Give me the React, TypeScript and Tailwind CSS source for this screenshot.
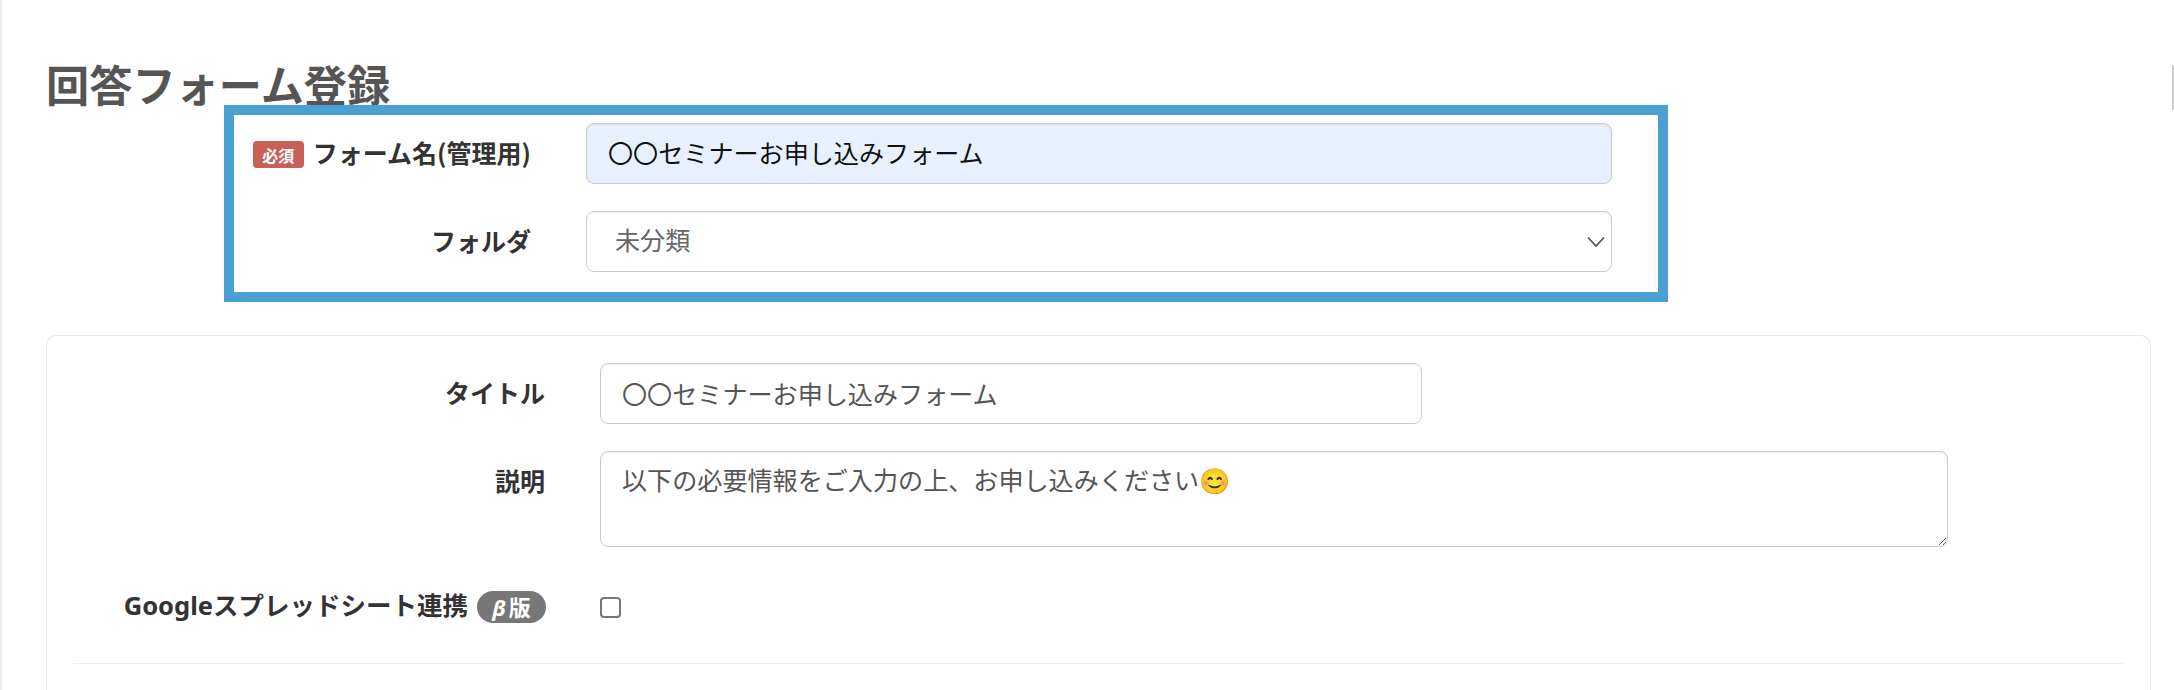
import React from "react";

const inputCls =
  "block h-[61px] rounded-[8px] border border-[#cccccc] px-[21px] text-[25.1px] outline-none shadow-[inset_0_1px_2px_rgba(0,0,0,0.08)] [font-family:'Noto_Sans_CJK_JP','Noto_Sans',sans-serif]";
const labelCls = "font-bold text-[25px] leading-[36px] text-[#333333] text-right";

export default function App() {
  return (
    <div className="relative h-[690px] w-[2174px] overflow-hidden bg-white [font-family:'Noto_Sans','Noto_Sans_CJK_JP',sans-serif] border-l-2 border-[#eeeeee] flex flex-col">
      <div className="flex justify-between pl-[44px] pt-[58px] h-[105px] overflow-visible">
        <h1 className="text-[43.2px] leading-[50px] font-bold text-[#555555] [font-family:'Noto_Sans_CJK_JP',sans-serif]">回答フォーム登録</h1>
        <div className="mt-[7px] h-[45px] w-[2px] bg-[#cccccc]" />
      </div>

      <div className="ml-[222px] h-[197px] w-[1444px] border-[10px] border-[#4a9fd3] bg-white flex flex-col pt-[8px] gap-[27px] relative">
        <div className="flex items-center">
          <div className="w-[297px] shrink-0 flex justify-end items-center gap-[9px] -mt-[4px] [font-family:'Noto_Sans_CJK_JP',sans-serif]">
            <span className="inline-flex h-[27px] w-[51px] items-center justify-center rounded-[4px] bg-[#c8605a] text-[16px] font-bold text-white mt-[6px]">必須</span>
            <span className={labelCls}>フォーム名(管理用)</span>
          </div>
          <input readOnly defaultValue="〇〇セミナーお申し込みフォーム" className={inputCls + " ml-[55px] w-[1026px] bg-[#e8f0fe] text-[#111111] pb-[3px]"} />
        </div>
        <div className="flex items-center">
          <div className="w-[297px] shrink-0 [font-family:'Noto_Sans_CJK_JP',sans-serif] text-right -mt-[3px]">
            <span className={labelCls}>フォルダ</span>
          </div>
          <div className="relative ml-[55px] w-[1026px]">
            <select defaultValue="未分類" className={inputCls + " w-full appearance-none bg-white text-[#666666] pl-[28px] pb-[3px]"}>
              <option>未分類</option>
            </select>
            <svg className="absolute right-[7px] top-[25px]" width="18" height="12" viewBox="0 0 18 12" fill="none" stroke="#555555" strokeWidth="1.8">
              <path d="M1 1.5 L9 10 L17 1.5" />
            </svg>
          </div>
        </div>
      </div>

      <div className="mt-[33px] ml-[44px] w-[2105px] flex-1 rounded-t-[10px] border border-b-0 border-[#e5e5e5] pt-[27px] pl-[26px] pr-[26px]">
        <div className="flex items-center">
          <div className="w-[472px] text-right [font-family:'Noto_Sans_CJK_JP',sans-serif] -mt-[3px]"><span className={labelCls}>タイトル</span></div>
          <input readOnly defaultValue="〇〇セミナーお申し込みフォーム" className={inputCls + " ml-[55px] w-[822px] bg-white text-[#555555] pb-[2px]"} />
        </div>
        <div className="flex mt-[27px]">
          <div className="w-[472px] text-right [font-family:'Noto_Sans_CJK_JP',sans-serif] pt-[11px]"><span className={labelCls}>説明</span></div>
          <textarea readOnly defaultValue="以下の必要情報をご入力の上、お申し込みください😊" className={inputCls + " ml-[55px] h-[96px] w-[1348px] bg-white text-[#555555] pt-[9px] pb-[10px] leading-[36px]"} />
        </div>
        <div className="flex items-center mt-[44px]">
          <div className="w-[473px] flex justify-end items-center gap-[9px] [font-family:'Noto_Sans','Noto_Sans_CJK_JP',sans-serif]">
            <span className="font-bold text-[25.5px] leading-[36px] text-[#333333] text-right -mt-[4px]">Googleスプレッドシート連携</span>
            <span className="inline-flex h-[32px] w-[69px] items-center justify-center gap-[3px] rounded-full bg-[#777777] text-[22px] font-bold text-white"><i>β</i>版</span>
          </div>
          <div className="ml-[54px] h-[21px] w-[21px] rounded-[4px] border-2 border-[#777777] bg-white" />
        </div>
        <div className="mt-[40px] h-px w-[2050px] bg-[#eeeeee]" />
      </div>
    </div>
  );
}
